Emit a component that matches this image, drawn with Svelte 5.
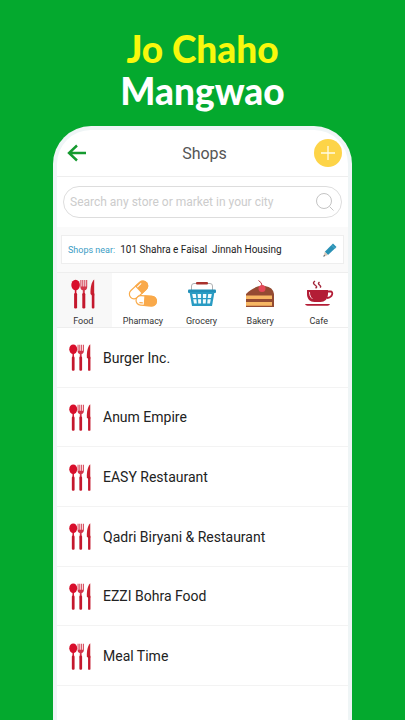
<script>
  let query = $state("");
  let selected = $state("Food");

  const categories = ["Food", "Pharmacy", "Grocery", "Bakery", "Cafe"];
  const shops = [
    "Burger Inc.",
    "Anum Empire",
    "EASY Restaurant",
    "Qadri Biryani & Restaurant",
    "EZZI Bohra Food",
    "Meal Time",
  ];
</script>

{#snippet cutlery()}
  <svg class="cutlery" viewBox="0 0 24 30" aria-hidden="true">
    <ellipse cx="4.6" cy="6" rx="4.3" ry="5.3" fill="#d80f2c" />
    <path d="M3.800 10h1.600v6H3.800z" fill="#d80f2c" />
    <path
      d="M9.400 1v7c0 2 1 2.900 2.400 3.300V17h2v-5.700c1.400-.4 2.400-1.300 2.400-3.300V1h-1v6.500h-.9V1h-1v6.500h-1V1h-1v6.500h-.9V1z"
      fill="#d3354a"
    />
    <path d="M23.200.5c-2.800 2.600-4 8.400-3.700 14.500l1.500 1.500h2.200z" fill="#c91f2f" />
    <rect x="3.100" y="14" width="3" height="15.500" rx="1.200" fill="#c4182d" />
    <rect x="11.300" y="14" width="3" height="15.500" rx="1.200" fill="#c4182d" />
    <rect x="20.800" y="14" width="2.600" height="15.500" rx="1" fill="#c4182d" />
  </svg>
{/snippet}

<main>
  <h1><span>Jo Chaho</span>Mangwao</h1>

  <div class="phone">
    <header>
      <button class="back" aria-label="Back">
        <svg viewBox="0 0 20 18">
          <path d="M10 1.500 2 9l8 7.500M2.500 9H19" fill="none" stroke="#159a2f" stroke-width="2.400" />
        </svg>
      </button>
      <h2>Shops</h2>
      <button class="add" aria-label="Add">
        <svg viewBox="0 0 28 28">
          <path d="M14 7v14M7 14h14" stroke="#fffbe6" stroke-width="1.300" />
        </svg>
      </button>
    </header>

    <div class="search-area">
      <label class="search">
        <input
          type="text"
          aria-label="Search"
          placeholder="Search any store or market in your city"
          bind:value={query}
        />
        <svg viewBox="0 0 20 20" aria-hidden="true">
          <circle cx="9" cy="9" r="7.500" />
          <path d="m14.500 14.500 4 4" />
        </svg>
      </label>
    </div>

    <div class="near-area">
      <div class="near">
        <span class="near-label">Shops near:</span>
        <span class="address">101 Shahra e Faisal&nbsp; Jinnah Housing</span>
        <button class="edit" aria-label="Edit address">
          <svg viewBox="0 0 14 14">
            <path d="M10 .5 13.500 4 5 12 1.800 8.800z" fill="#2a91b5" />
            <path d="m8.500 2 3.500 3.500" stroke="#5db4d0" stroke-width=".8" />
            <path d="M1.800 8.800 5 12 .5 13.500z" fill="#d9c8b8" />
            <path d="M1 11.800 2.200 13 .3 13.700z" fill="#456" />
          </svg>
        </button>
      </div>
    </div>

    <nav>
      {#each categories as name}
        <button class="tab" class:active={selected === name} onclick={() => (selected = name)}>
          <span class="icon">
            {#if name === "Food"}
              {@render cutlery()}
            {:else if name === "Pharmacy"}
              <svg viewBox="0 0 30 28">
                <g transform="rotate(-43 10.500 10)">
                  <rect x="-.2" y="5.200" width="21.500" height="9.600" rx="4.800" fill="#fff" stroke="#f9ab4b" stroke-width="1.200" />
                  <path d="M10.500 4.600h6a5.400 5.400 0 0 1 0 10.800h-6z" fill="#f9a94a" />
                  <path d="M12 7h4.500" stroke="#fff" stroke-width="1.100" stroke-linecap="round" />
                </g>
                <g transform="rotate(4 19 21)">
                  <rect x="8" y="16" width="20.500" height="9.600" rx="4.800" fill="#fff" stroke="#f9ab4b" stroke-width="1.200" />
                  <path d="M16 15.400h7.500a5.400 5.400 0 0 1 0 10.800H16z" fill="#f9a94a" />
                  <path d="M11.500 23.200h3.500" stroke="#f9a94a" stroke-width="1.200" />
                </g>
              </svg>
            {:else if name === "Grocery"}
              <svg viewBox="0 0 30 28">
                <path d="M4.500 11V6Q4.500 3.500 7 3.500h16q2.500 0 2.500 2.500v5" fill="none" stroke="#a5a7aa" stroke-width=".9" />
                <rect x="9" y="2" width="12" height="2.600" rx="1" fill="#a8322d" />
                <rect x="1" y="9.500" width="28" height="3.600" rx="1" fill="#218fb8" />
                <path d="M2.500 12h25L25 26H5z" fill="#289bc3" />
                <path
                  d="M5.200 14h3.600l.5 4H6zm5.400 0h3.500v4h-3.200zm5.300 0h3.500l-.3 4h-3.200zm5.300 0h3.600l-.8 4h-3.300zM6.200 19.300h3.200l.4 4.200H7zm4.800 0h3.100v4.200h-2.800zm4.900 0H19l-.3 4.200h-2.800zm4.700 0h3.200l-.8 4.200h-2.800z"
                  fill="#f3fbfd"
                />
              </svg>
            {:else if name === "Bakery"}
              <svg viewBox="0 0 30 28">
                <path d="M1 14C7 8 14 5 20 6q8 1 9 8v13H1z" fill="#944b32" />
                <path d="M1 15.500h26V19H1zM1 22h26v3.800H1z" fill="#f7b763" />
                <circle cx="17" cy="8.500" r="3.500" fill="#e64858" />
                <path d="M17 5.500q0-3-3.500-5" fill="none" stroke="#b83b46" stroke-width="1" />
              </svg>
            {:else}
              <svg viewBox="0 0 30 28">
                <path d="M3 10h21v4c0 5-3.500 8-7.500 8h-6C6 22 3 19 3 14z" fill="#b31d36" />
                <path d="M23 11.500h3.500c3 0 2.500 6-3.500 6.500" fill="none" stroke="#b31d36" stroke-width="1.800" />
                <path d="M5.500 12.500c0 3 1 4.500 2.500 6" fill="none" stroke="#f7dfe3" stroke-width="1" stroke-linecap="round" />
                <path d="M1 24h25q-.5 1.800-2.500 1.800h-20Q1.500 25.800 1 24z" fill="#b31d36" />
                <path d="M11 1q-3 2 0 4t.5 3M15.500 2q-2 1.500 0 3t.5 2.500" fill="none" stroke="#a3253a" stroke-width="1.500" />
              </svg>
            {/if}
          </span>
          {name}
        </button>
      {/each}
    </nav>

    <ul>
      {#each shops as shop}
        <li>{@render cutlery()}<span>{shop}</span></li>
      {/each}
    </ul>
  </div>
</main>

<style>
  :global(body) {
    margin: 0;
    background: #04a92e;
  }

  main {
    box-sizing: border-box;
    height: 100vh;
    padding: 28px 53px 0;
    display: flex;
    flex-direction: column;
    overflow: hidden;
    background: #04a92e;
    font-family: Roboto, "Liberation Sans", sans-serif;
  }

  h1 {
    margin: 0 0 14px;
    color: #fff;
    font: 900 37px/42px Lato, "Open Sans", sans-serif;
    text-align: center;
  }

  h1 span {
    display: block;
    color: #f8f80c;
  }

  h2 {
    margin: 0;
    color: #555;
    font-size: 16px;
    font-weight: 400;
  }

  button {
    padding: 0;
    border: 0;
    background: none;
    font-family: inherit;
    cursor: pointer;
  }

  svg {
    display: block;
  }

  .phone {
    flex: 1;
    border: 4px solid #eff5f6;
    border-bottom: 0;
    border-radius: 38px 38px 0 0;
    background: #fff;
    overflow: hidden;
  }

  header {
    display: flex;
    align-items: center;
    justify-content: space-between;
    height: 46px;
    padding: 0 6px 0 10px;
    border-bottom: 1px solid #eee;
  }

  .back {
    width: 28px;
  }

  .back svg {
    width: 20px;
    height: 18px;
  }

  .add {
    width: 28px;
    height: 28px;
    border-radius: 50%;
    background: #fdd448;
  }

  .search-area {
    padding: 9px 6px;
  }

  .search {
    display: flex;
    align-items: center;
    height: 30px;
    padding: 0 6px;
    border: 1px solid #ddd;
    border-radius: 16px;
  }

  .search input {
    flex: 1;
    min-width: 0;
    padding: 0;
    border: 0;
    outline: 0;
    background: none;
    color: #555;
    font: 12px Roboto, sans-serif;
  }

  .search input::placeholder {
    color: #ccc;
    opacity: 1;
  }

  .search svg {
    width: 20px;
    height: 20px;
    fill: none;
    stroke: #c4c4c4;
    stroke-width: 1;
  }

  .near-area {
    padding: 8px 4px;
    background: #fafafa;
  }

  .near {
    display: flex;
    align-items: center;
    height: 27px;
    padding: 0 6px;
    border: 1px solid #eee;
    background: #fff;
    white-space: nowrap;
    font-size: 10px;
  }

  .near-label {
    margin-right: 5px;
    color: #3c9dc5;
    font-size: 9px;
  }

  .address {
    color: #222;
  }

  .edit {
    margin-left: auto;
  }

  .edit svg {
    width: 14px;
    height: 14px;
  }

  nav {
    display: flex;
    height: 54px;
    border-top: 1px solid #eee;
    border-bottom: 1px solid #eee;
  }

  .tab {
    flex: 59;
    display: flex;
    flex-direction: column;
    align-items: center;
    padding-top: 5px;
    color: #333;
    font-size: 9px;
    line-height: 12px;
  }

  .tab:first-child {
    flex: 53;
    padding-right: 2px;
    margin-right: 2px;
  }

  .tab.active {
    background: #f8f8f8;
  }

  .icon {
    height: 32px;
    margin-bottom: 5px;
  }

  .icon svg {
    width: 30px;
    height: 28px;
    margin-top: 2px;
  }

  .icon .cutlery {
    width: 24px;
    height: 32px;
    margin-top: 0;
  }

  ul {
    display: grid;
    grid-auto-rows: 1fr;
    min-height: 358px;
    margin: 0;
    padding: 0;
    list-style: none;
  }

  li {
    display: flex;
    align-items: center;
    gap: 12px;
    padding: 1px 0 0 12px;
    border-bottom: 1px solid #f3f3f3;
    color: #222;
    font-size: 14px;
  }

  .cutlery {
    width: 22px;
    height: 29px;
  }
</style>
